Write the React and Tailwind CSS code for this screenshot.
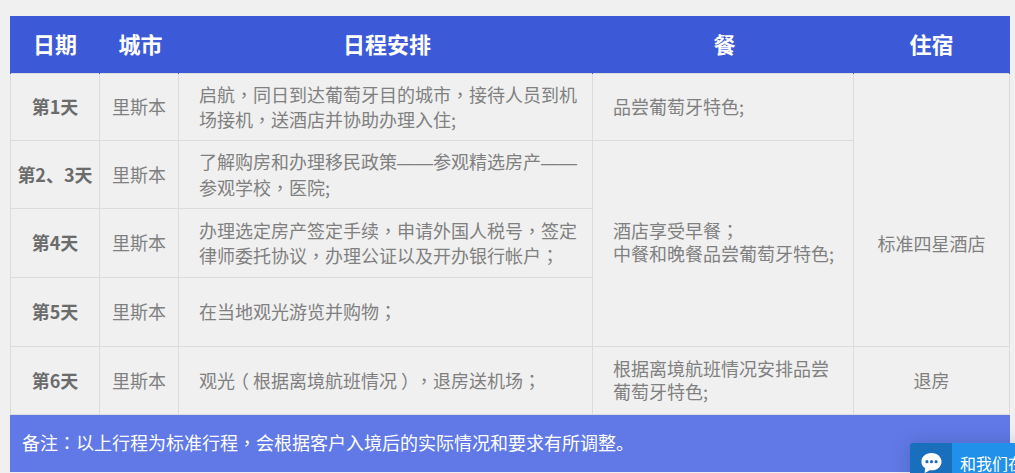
import React from "react";

const font = { fontFamily: '"Microsoft YaHei", "Noto Sans CJK SC", sans-serif' };

const dayCell = "border border-[#dcdcdc] text-center font-bold text-[18px] text-[#6b6b6b]";
const cityCell = "border border-[#dcdcdc] text-center text-[18px]";
const textCell = "border border-[#dcdcdc] pl-5 pr-[14px] text-[18px] leading-[24.5px]";
const mealCell = "border border-[#dcdcdc] pl-5 pr-[14px] text-[18px] leading-[23px]";
const headCell = "border-x border-[#3c5ad8] pb-[2px]";

// full width punctuation sits in the middle of its box in the reference
const Zh = ({ children }) =>
  children.split(/([，；：（）]|——)/).map((part, i) => {
    if (i % 2 === 0) return part;
    if (part === "——") {
      return <span key={i} className="font-['Liberation_Sans']">{part}</span>;
    }
    if (part === "（") {
      return <span key={i} className="relative right-[4px] font-['Noto_Sans_CJK_TC']">{part}</span>;
    }
    if (part === "）") {
      return <span key={i} className="relative left-[4px] font-['Noto_Sans_CJK_TC']">{part}</span>;
    }
    return <span key={i} className="font-['Noto_Sans_CJK_TC']">{part}</span>;
  });

const App = () => {
  return (
    <div className="relative h-[473px] w-[1015px] overflow-hidden bg-[#f0f0f0] pt-4 pl-2.5 text-[#808080] [text-spacing-trim:space-all]" style={font}>
      <table className="w-[999px] table-fixed border-collapse">
        <colgroup>
          <col className="w-[89px]" />
          <col className="w-[79px]" />
          <col className="w-[414px]" />
          <col className="w-[261px]" />
          <col className="w-[156px]" />
        </colgroup>
        <thead>
          <tr className="h-[57px] bg-[#3c5ad8] text-[22px] font-bold text-white">
            <th className={headCell}>日期</th>
            <th className={headCell + " pl-[3px]"}>城市</th>
            <th className={headCell + " pl-[3px]"}>日程安排</th>
            <th className={headCell + " pl-[3px]"}>餐</th>
            <th className={headCell}>住宿</th>
          </tr>
        </thead>
        <tbody>
          <tr className="h-[67px]">
            <td className={dayCell}>第1天</td>
            <td className={cityCell}>里斯本</td>
            <td className={textCell}><Zh>启航，同日到达葡萄牙目的城市，接待人员到机场接机，送酒店并协助办理入住;</Zh></td>
            <td className={mealCell}>品尝葡萄牙特色;</td>
            <td rowSpan={4} className={cityCell + " pt-[68px]"}>标准四星酒店</td>
          </tr>
          <tr className="h-[68px]">
            <td className={dayCell}>第2、3天</td>
            <td className={cityCell}>里斯本</td>
            <td className={textCell}><Zh>了解购房和办理移民政策——参观精选房产——参观学校，医院;</Zh></td>
            <td rowSpan={3} className={mealCell + " pb-[2px]"}><Zh>酒店享受早餐；</Zh><br />中餐和晚餐品尝葡萄牙特色;</td>
          </tr>
          <tr className="h-[69px]">
            <td className={dayCell}>第4天</td>
            <td className={cityCell}>里斯本</td>
            <td className={textCell}><Zh>办理选定房产签定手续，申请外国人税号，签定律师委托协议，办理公证以及开办银行帐户；</Zh></td>
          </tr>
          <tr className="h-[69px]">
            <td className={dayCell}>第5天</td>
            <td className={cityCell}>里斯本</td>
            <td className={textCell}><Zh>在当地观光游览并购物；</Zh></td>
          </tr>
          <tr className="h-[68px]">
            <td className={dayCell}>第6天</td>
            <td className={cityCell}>里斯本</td>
            <td className={textCell}><Zh>观光（根据离境航班情况），退房送机场；</Zh></td>
            <td className={mealCell}>根据离境航班情况安排品尝葡萄牙特色;</td>
            <td className={cityCell}>退房</td>
          </tr>
        </tbody>
      </table>
      <div className="h-[57px] w-[1000px] bg-[#6079e6] px-3 text-[18px] leading-[55px] text-white">
        <Zh>备注：以上行程为标准行程，会根据客户入境后的实际情况和要求有所调整。</Zh>
      </div>

      {/* chat widget, cut off by the window */}
      <div className="absolute top-[443px] left-[910px] flex h-[40px] w-[200px] rounded-tl-[3px] bg-[#2090ea] text-[16px] text-white shadow-[0_0_20px_rgba(0,0,0,0.15)]">
        <div className="flex h-full w-[42px] justify-center rounded-tl-[3px] bg-[#1a6fbd] pt-[10px]">
          <svg width="21" height="21" viewBox="0 0 23 23">
            <path d="M11.500 0C5 0 .5 4 .5 9.500c0 3 1.600 5.500 4 7l-.5 5.500 5.500-3.200c.7.1 1.300.2 2 .2 6.500 0 11-4.500 11-9.500S18 0 11.500 0z" fill="#fff" />
            <circle cx="6.500" cy="9.500" r="1.700" fill="#1a6fbd" />
            <circle cx="11.500" cy="9.500" r="1.700" fill="#1a6fbd" />
            <circle cx="16.500" cy="9.500" r="1.700" fill="#1a6fbd" />
          </svg>
        </div>
        <span className="pt-[8px] pl-2 whitespace-nowrap">和我们在线交谈</span>
      </div>
    </div>
  );
};

export default App;
